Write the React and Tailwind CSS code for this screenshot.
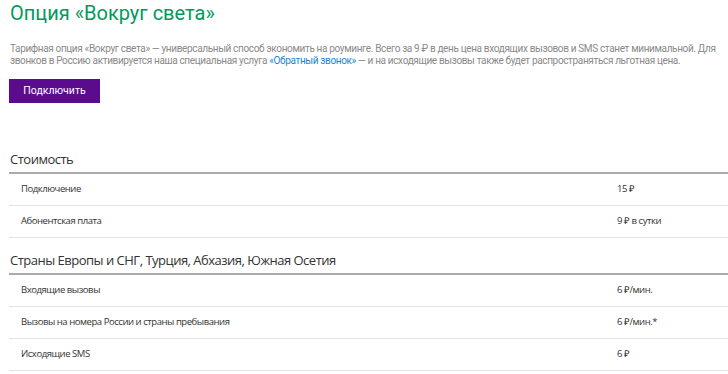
import React from 'react';

const sections = [
    {
        title: "Стоимость",
        rows: [
            ["Подключение", "15 ₽"],
            ["Абонентская плата", "9 ₽ в сутки"],
        ],
    },
    {
        title: "Страны Европы и СНГ, Турция, Абхазия, Южная Осетия",
        rows: [
            ["Входящие вызовы", "6 ₽/мин."],
            ["Вызовы на номера России и страны пребывания", "6 ₽/мин.*"],
            ["Исходящие SMS", "6 ₽"],
        ],
    },
];

export default function App() {
    return (
        <div className="w-[728px] h-[374px] overflow-hidden bg-white pl-[10px]">
            <h1
                className="text-[20px] leading-[24px] pt-[1px] text-[#009a5c]"
                style={{ fontFamily: "Roboto, 'Open Sans', sans-serif" }}
            >
                Опция «Вокруг света»
            </h1>

            <p
                className="mt-[18px] text-[10px] leading-[12px] tracking-[-0.35px] text-[#8a8a8a]"
                style={{ fontFamily: "Roboto, 'Open Sans', sans-serif" }}
            >
                <span className="block whitespace-nowrap">
                    Тарифная опция «Вокруг света» — универсальный способ экономить на роуминге. Всего за 9 ₽ в день цена входящих вызовов и SMS станет минимальной. Для
                </span>
                <span className="block whitespace-nowrap">
                    звонков в Россию активируется наша специальная услуга <span className="text-[#1a85d6]">«Обратный звонок»</span> — и на исходящие вызовы также будет распространяться льготная цена.
                </span>
            </p>

            <button
                className="mt-[12px] -ml-[1px] w-[91px] h-[24px] bg-[#5b0b8e] text-white text-[10.5px] flex items-center justify-center"
                style={{ fontFamily: "Roboto, 'Open Sans', sans-serif" }}
            >
                Подключить
            </button>

            <div className="mt-[34px] -ml-[1px]" style={{ fontFamily: "'Open Sans', sans-serif" }}>
                {sections.map((s) => (
                    <div key={s.title}>
                        <div className="h-[35px] flex items-end pb-[5px] pl-[1px]">
                            <h2 className="text-[13px] leading-[16px] tracking-[-0.5px] text-[#333]">{s.title}</h2>
                        </div>
                        <div className="border-t-2 border-[#ababab]">
                            {s.rows.map(([label, value]) => (
                                <div key={label} className="h-[32px] flex items-center border-b border-[#e2e2e2] text-[9.5px] tracking-[-0.45px] text-[#333]">
                                    <div className="w-[608px] pl-[12px]">{label}</div>
                                    <div className="flex-1">{value}</div>
                                </div>
                            ))}
                        </div>
                    </div>
                ))}
            </div>
        </div>
    );
}
